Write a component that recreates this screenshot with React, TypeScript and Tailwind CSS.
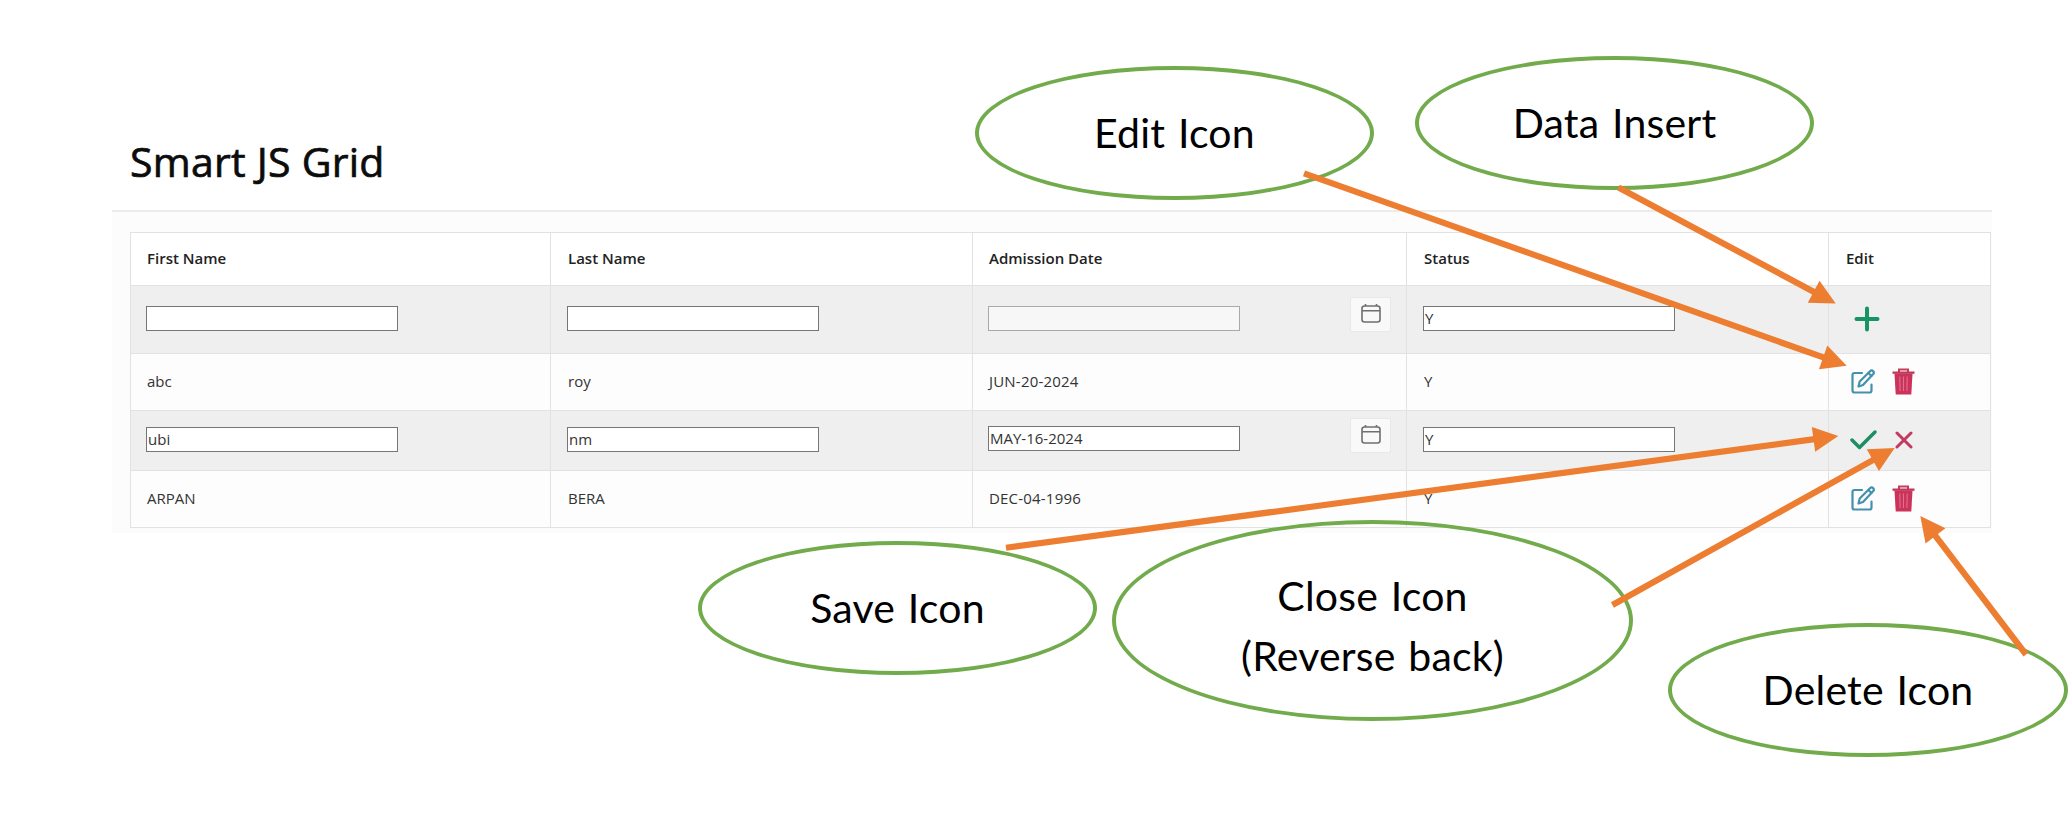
import React from "react";

const FONT = "font-['Open_Sans','Noto_Sans',sans-serif]";

type FieldProps = { value?: string; muted?: boolean; raised?: boolean };

function Field({ value = "", muted, raised }: FieldProps) {
  return (
    <div
      className={`-ml-px flex h-[25px] w-[252px] items-center border-[1.5px] pl-px ${muted ? "border-[#a9a9a9] bg-[#f7f7f7]" : "border-[#767676] bg-white"} ${raised ? "-mt-[3px]" : ""}`}
    >
      {value}
    </div>
  );
}

function CalendarButton() {
  return (
    <div className="mr-[15px] mb-[8px] flex h-[35px] w-[41px] items-center justify-center rounded-[2px] border border-[#e8e8e8] bg-[#f9f9f9] pb-[3px]">
      <svg width="20" height="19" viewBox="0 0 20 19" fill="none" stroke="#6f6f6f" strokeWidth="1.6">
        <rect x="1" y="2" width="18" height="16" rx="2.5" />
        <path d="M1 6.800h18M4.500 0v2M15.500 0v2" />
      </svg>
    </div>
  );
}

function EditIcon() {
  return (
    <svg width="25" height="25" viewBox="0 0 25 25" fill="none" stroke="#4391ad" strokeWidth="2.2" strokeLinejoin="round" strokeLinecap="round">
      <path d="M11 4H3.500C2.300 4 1.500 4.800 1.500 6v15.500c0 1.200.8 2 2 2H18.500c1.200 0 2-.8 2-2V15.500" />
      <path d="M7.500 17.500l1.200-5L19 2.200c1-1 2.200-1 3.100-.1s.9 2.200-.1 3.200L12 16z" />
      <path d="M17.500 4l3 3" />
    </svg>
  );
}

function TrashIcon() {
  return (
    <svg width="23" height="27" viewBox="0 0 23 27" fill="none">
      <path d="M7 4V1.500h9V4" stroke="#c93a5e" strokeWidth="2" />
      <path d="M0.500 3.500h22v2.300h-22z" fill="#b93a5a" />
      <path d="M2.500 5.500h18L19.300 26.500H3.700z" fill="#cb335a" />
      <path d="M7.800 8.500l.3 14.500M11.500 8.500v14.500M15.200 8.500l-.3 14.500" stroke="#e0708f" strokeWidth="1.100" />
    </svg>
  );
}

function PlusIcon() {
  return (
    <svg width="26" height="26" viewBox="0 0 26 26" stroke="#169464" strokeWidth="4" strokeLinecap="round">
      <path d="M13 2.500v21M2.500 13h21" />
    </svg>
  );
}

function CheckIcon() {
  return (
    <svg width="27" height="20" viewBox="0 0 27 20" fill="none" stroke="#1c8f63" strokeWidth="3.500" strokeLinecap="round" strokeLinejoin="round">
      <path d="M2 10l7.500 7.500L25 2" />
    </svg>
  );
}

function CloseIcon() {
  return (
    <svg width="18" height="18" viewBox="0 0 18 18" fill="none" stroke="#c23a62" strokeWidth="3" strokeLinecap="round">
      <path d="M2 2l14 14M16 2L2 16" />
    </svg>
  );
}

const COLS = "grid grid-cols-[420px_422px_434px_422px_162px]";
const CELL = "flex items-center border-r border-[#e2e2e2] pb-[2px]";
const PADS = ["pl-[16px]", "pl-[17px]", "pl-[16px]", "pl-[17px]", "pl-[17px]"];

function Row({ className, cells }: { className: string; cells: React.ReactNode[] }) {
  return (
    <div className={`${COLS} border-b border-[#e2e2e2] ${className}`}>
      {cells.map((cell, i) => (
        <div key={i} className={`${CELL} ${PADS[i]}`}>
          {cell}
        </div>
      ))}
    </div>
  );
}

function RowActions() {
  return (
    <div className="flex items-center gap-[16px] pl-[5px]">
      <EditIcon />
      <TrashIcon />
    </div>
  );
}

function DateCell({ children }: { children: React.ReactNode }) {
  return <div className="flex w-full items-center justify-between">{children}</div>;
}

const OUT =
  "absolute flex flex-col items-center justify-center rounded-[50%] border-[4.5px] border-[#72ab4c] text-center font-['Lato','Open_Sans',sans-serif] text-[41px] leading-[60px] text-black";

function Callout({ className, lines }: { className: string; lines: string[] }) {
  return (
    <div className={`${OUT} ${className}`}>
      {lines.map((line) => (
        <span key={line} className="whitespace-nowrap tracking-[0.2px] [word-spacing:2px]">
          {line}
        </span>
      ))}
    </div>
  );
}

function Arrow({ x1, y1, x2, y2 }: { x1: number; y1: number; x2: number; y2: number }) {
  const len = Math.hypot(x2 - x1, y2 - y1);
  const ux = (x2 - x1) / len;
  const uy = (y2 - y1) / len;
  const bx = x2 - ux * 25;
  const by = y2 - uy * 25;
  return (
    <g>
      <line x1={x1} y1={y1} x2={bx + ux} y2={by + uy} stroke="#ec7d31" strokeWidth="6.200" />
      <polygon
        fill="#ec7d31"
        points={`${x2},${y2} ${bx - uy * 12.5},${by + ux * 12.5} ${bx + uy * 12.5},${by - ux * 12.5}`}
      />
    </g>
  );
}

export default function App() {
  return (
    <div className={`relative h-[829px] w-[2070px] overflow-hidden bg-white ${FONT}`}>
      <main className="ml-[112px] w-[1880px] pt-[131px]">
        <h1 className="h-[79px] pl-[18px] text-[41px] font-medium leading-[60px] text-[#0c0c0c]">
          <span className="inline-block whitespace-nowrap tracking-[0.25px] [-webkit-text-stroke:0.7px_#0c0c0c]">Smart JS Grid</span>
        </h1>
        <div className="h-[323px] border-t-2 border-[#ebebeb] bg-[#fcfcfc] pt-[20px] pl-[18px]">
          <div className="w-[1861px] border-t border-l border-[#e2e2e2] text-[15px] text-[#333]">
            <Row
              className="h-[53px] bg-white font-semibold text-[#222]"
              cells={["First Name", "Last Name", "Admission Date", "Status", "Edit"]}
            />
            <Row
              className="h-[68px] bg-[#efefef]"
              cells={[
                <Field />,
                <Field />,
                <DateCell>
                  <Field muted />
                  <CalendarButton />
                </DateCell>,
                <Field value="Y" />,
                <div className="pl-[8px]">
                  <PlusIcon />
                </div>,
              ]}
            />
            <Row className="h-[57px] bg-[#fdfdfd]" cells={["abc", "roy", <span className="tracking-[0.2px]">JUN-20-2024</span>, "Y", <RowActions />]} />
            <Row
              className="h-[60px] bg-[#efefef]"
              cells={[
                <Field value="ubi" />,
                <Field value="nm" />,
                <DateCell>
                  <Field value="MAY-16-2024" raised />
                  <CalendarButton />
                </DateCell>,
                <Field value="Y" />,
                <div className="flex items-center gap-[18px] pl-[4px]">
                  <CheckIcon />
                  <CloseIcon />
                </div>,
              ]}
            />
            <Row className="h-[57px] bg-[#fdfdfd]" cells={["ARPAN", "BERA", <span className="tracking-[0.2px]">DEC-04-1996</span>, "Y", <RowActions />]} />
          </div>
        </div>
      </main>

      <Callout className="top-[66px] left-[975px] h-[134px] w-[399px]" lines={["Edit Icon"]} />
      <Callout className="top-[56px] left-[1415px] h-[134px] w-[399px]" lines={["Data Insert"]} />
      <Callout className="top-[541px] left-[698px] h-[134px] w-[399px]" lines={["Save Icon"]} />
      <Callout className="top-[520px] left-[1112px] h-[201px] w-[521px] pt-[10px]" lines={["Close Icon", "(Reverse back)"]} />
      <Callout className="top-[623px] left-[1668px] h-[134px] w-[400px]" lines={["Delete Icon"]} />

      <svg className="absolute inset-0" width="2070" height="829" viewBox="0 0 2070 829">
        <Arrow x1={1304} y1={173.3} x2={1846.7} y2={365.7} />
        <Arrow x1={1618.5} y1={187.5} x2={1835.7} y2={303.5} />
        <Arrow x1={1006} y1={547.7} x2={1838.3} y2={436} />
        <Arrow x1={1612.4} y1={605} x2={1894.7} y2={448} />
        <Arrow x1={2026} y1={654.5} x2={1920.3} y2={516} />
      </svg>
    </div>
  );
}
